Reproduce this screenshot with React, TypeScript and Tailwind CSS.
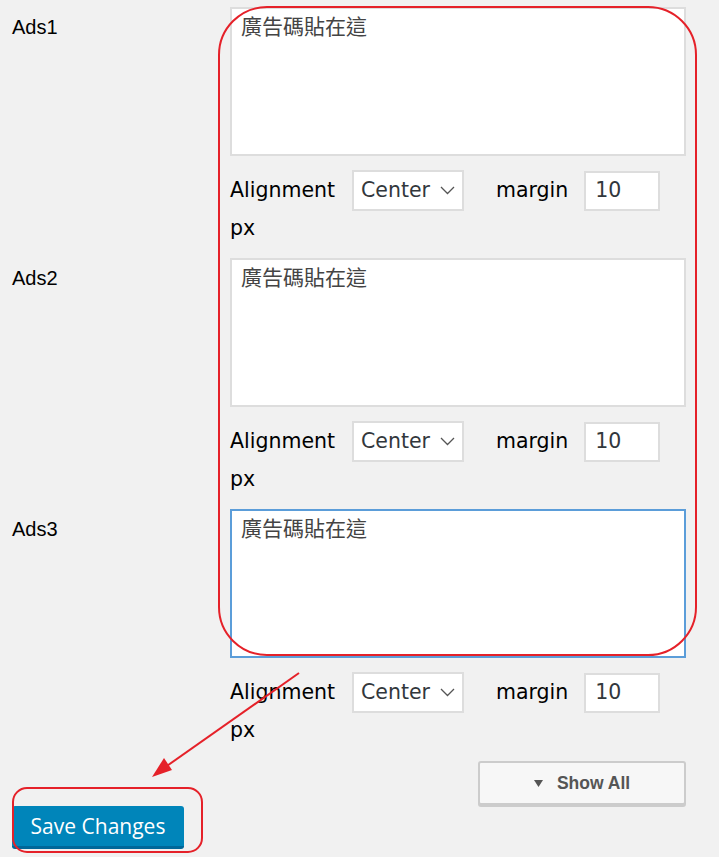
import React from "react";

const ads = [
  { name: "Ads1", focused: false },
  { name: "Ads2", focused: false },
  { name: "Ads3", focused: true },
];

const ui = { fontFamily: '"DejaVu Sans", Verdana, sans-serif' };
const cjk = { fontFamily: '"DejaVu Sans", "Noto Sans CJK TC", sans-serif' };

function Chevron() {
  return (
    <svg width="15" height="9" viewBox="0 0 15 9" fill="none" className="ml-auto">
      <path d="M1 1l6.5 6.5L14 1" stroke="#555" strokeWidth="1.3" />
    </svg>
  );
}

function AdBlock({ name, focused }: { name: string; focused: boolean }) {
  return (
    <div className="flex">
      <div
        className="w-[230px] pl-3 pt-[6px] text-[20px] leading-[28px] text-black"
        style={{ fontFamily: '"Liberation Sans", Arial, sans-serif' }}
      >
        {name}
      </div>
      <div className="w-[456px]">
        <div
          className={
            "h-[149px] w-full border-2 bg-white px-[9px] pt-[4px] text-[21px] leading-[28px] text-[#444] " +
            (focused ? "border-[#5b9dd9]" : "border-[#dddddd]")
          }
          style={cjk}
        >
          廣告碼貼在這
        </div>
        <div className="mt-[14px] flex h-[41px] items-center text-[20.5px] text-black" style={ui}>
          <span className="w-[122px]">Alignment</span>
          <div className="flex h-[41px] w-[112px] items-center border-2 border-[#dddddd] bg-white pl-[7px] pr-[7px] text-[#32373c]">
            <span>Center</span>
            <Chevron />
          </div>
          <span className="ml-[32px]">margin</span>
          <div className="ml-[16px] flex h-[40px] w-[76px] items-center border-2 border-[#dddddd] bg-white pl-[9px] text-[#32373c]">
            10
          </div>
        </div>
        <div className="h-[34px] text-[20.5px] leading-[34px] text-black" style={ui}>
          px
        </div>
        <div className="h-[13px]" />
      </div>
    </div>
  );
}

export default function App() {
  return (
    <div className="relative h-[857px] w-[719px] overflow-hidden bg-[#f1f1f1]">
      <div className="pt-[7px]">
        {ads.map((ad) => (
          <AdBlock key={ad.name} name={ad.name} focused={ad.focused} />
        ))}
        <div className="flex w-[686px] justify-end pt-[1px]">
          <button
            className="flex h-[44px] w-[208px] items-center justify-center gap-[14px] rounded-[3px] border-2 border-[#cccccc] bg-[#f7f7f7] text-[17.5px] font-bold text-[#555] shadow-[0_2px_0_#cccccc]"
            style={{ fontFamily: '"Liberation Sans", Arial, sans-serif' }}
          >
            <svg width="9" height="7" viewBox="0 0 9 7">
              <polygon points="0,0 9,0 4.5,7" fill="#555" />
            </svg>
            <span>Show All</span>
          </button>
        </div>
        <div className="pl-3 pt-[1px]">
          <button
            className="h-[43px] w-[172px] rounded-[3px] border-b-[3px] border-[#006799] bg-[#0085ba] pt-[2px] text-[21px] text-white"
            style={{ fontFamily: '"Open Sans", sans-serif' }}
          >
            Save Changes
          </button>
        </div>
      </div>

      <svg
        className="pointer-events-none absolute inset-0"
        width="719"
        height="857"
        viewBox="0 0 719 857"
        fill="none"
      >
        <rect x="219" y="7" width="477" height="648" rx="48" stroke="#e52129" strokeWidth="2" />
        <rect x="13" y="788" width="189" height="64" rx="14" stroke="#e52129" strokeWidth="2" />
        <line x1="299" y1="673" x2="164" y2="768" stroke="#e52129" strokeWidth="2" />
        <polygon points="152,777 172,770 164,758" fill="#e52129" />
      </svg>
    </div>
  );
}
